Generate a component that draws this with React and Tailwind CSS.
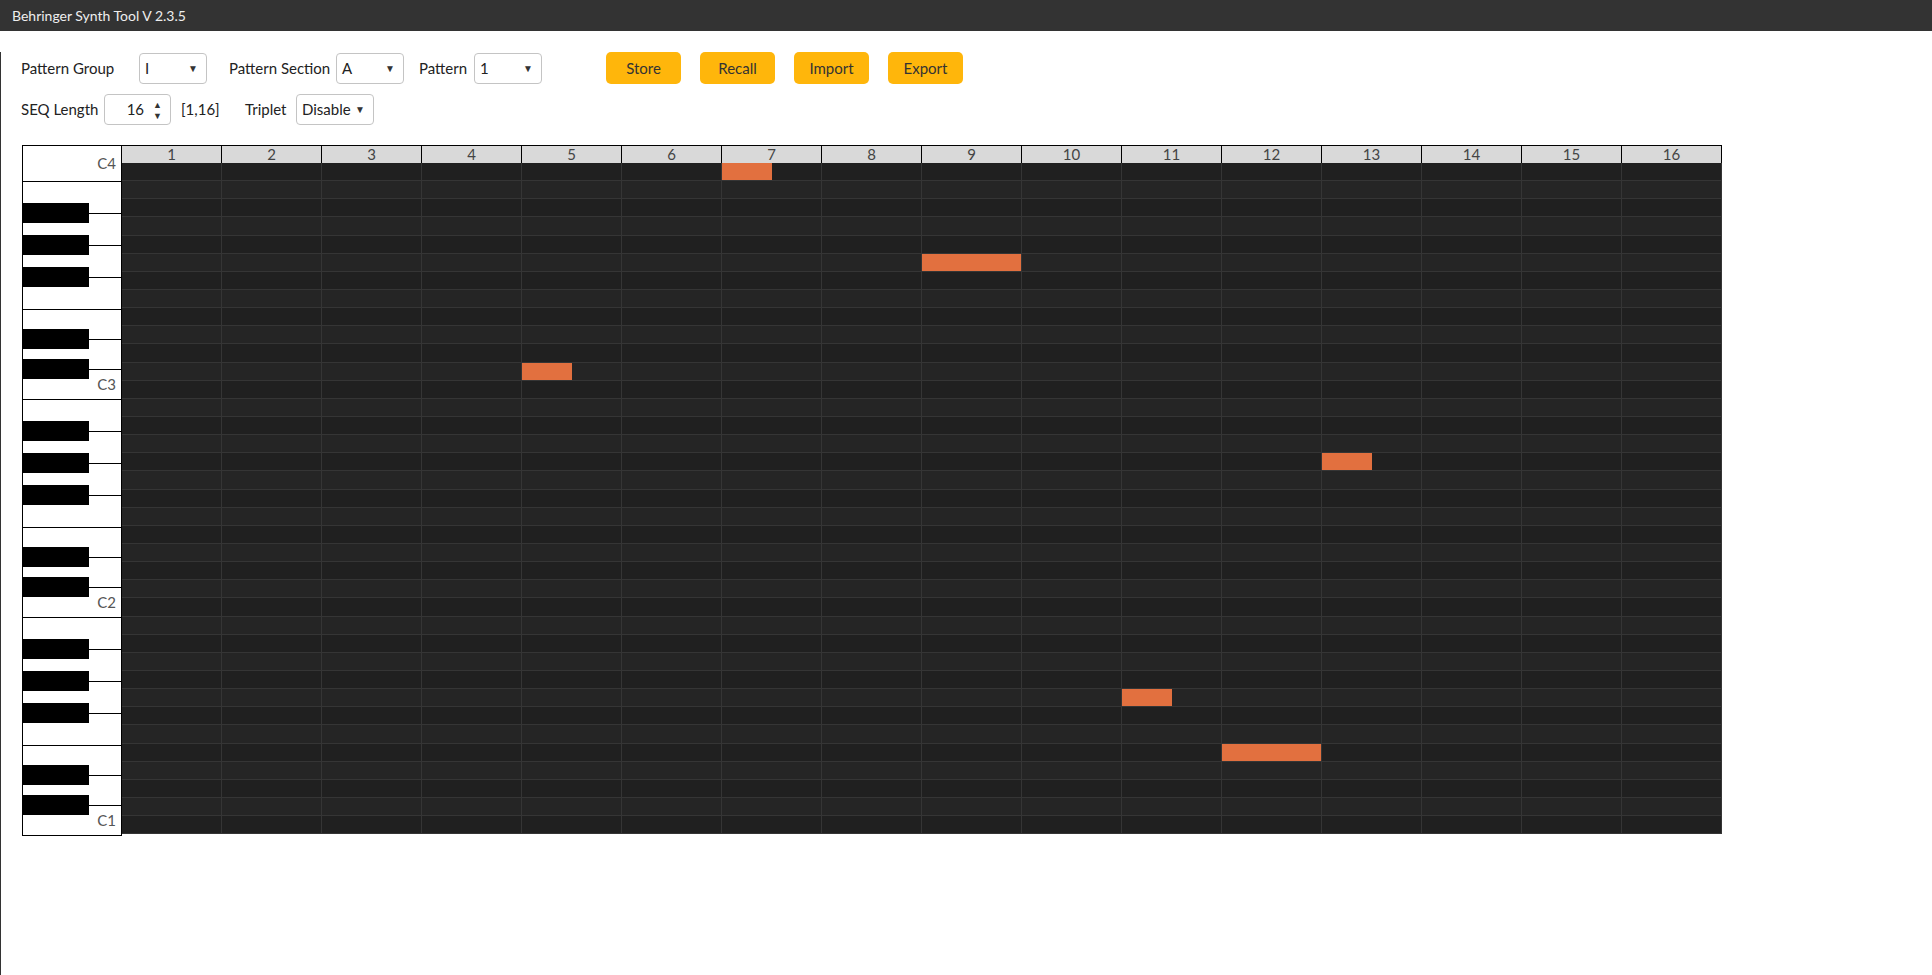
import React from "react";

// Piano roll: C4 (top) down to C1, 37 semitone rows, 16 steps.
const ROWS = 37;
const STEPS = 16;

// notes: row index from the top (0 = C4), step 1..16, half = half-step long
const NOTES = [
  { row: 0, step: 7, half: true },
  { row: 5, step: 9, half: false },
  { row: 11, step: 5, half: true },
  { row: 16, step: 13, half: true },
  { row: 29, step: 11, half: true },
  { row: 32, step: 12, half: false },
];

// white key heights per octave, from B down to C
const OCTAVE_WHITES = [
  { h: "h-[32px]" },
  { h: "h-[32px]" },
  { h: "h-[32px]" },
  { h: "h-[32px]" },
  { h: "h-[30px]" },
  { h: "h-[30px]" },
  { h: "h-[30px]", c: true },
];

// black key tops inside one octave (from B3 edge)
const BLACK_OFFSETS = [21, 53, 85, 147, 177];
const BLACK_TOP = {
  57: "top-[57px]", 89: "top-[89px]", 121: "top-[121px]", 183: "top-[183px]", 213: "top-[213px]",
  275: "top-[275px]", 307: "top-[307px]", 339: "top-[339px]", 401: "top-[401px]", 431: "top-[431px]",
  493: "top-[493px]", 525: "top-[525px]", 557: "top-[557px]", 619: "top-[619px]", 649: "top-[649px]",
};

function Select({ value, w }) {
  return (
    <div
      className={`${w} h-[31px] flex items-center justify-between border border-[#c4c4c4] rounded-[4px] bg-white pl-[5px] pr-[8px] text-[15px] text-[#222]`}
    >
      <span>{value}</span>
      <span className="text-[10px] text-[#333]">▼</span>
    </div>
  );
}

function Piano() {
  const whites = [];
  whites.push(
    <div key="c4" className="h-[36px] border-b border-black flex items-center justify-end pr-[5px] text-[15px] text-[#555]">
      C4
    </div>
  );
  [3, 2, 1].forEach((oct) => {
    OCTAVE_WHITES.forEach((k, i) => {
      const last = oct === 1 && k.c;
      whites.push(
        <div
          key={`${oct}-${i}`}
          className={`${last ? "h-[29px]" : k.h} ${last ? "" : "border-b border-black"} flex items-center justify-end pr-[5px] text-[15px] text-[#555]`}
        >
          {k.c ? `C${oct}` : ""}
        </div>
      );
    });
  });

  const blacks = [];
  [0, 1, 2].forEach((o) => {
    BLACK_OFFSETS.forEach((off) => {
      const top = 36 + o * 218 + off;
      blacks.push(
        <div key={top} className={`absolute left-0 ${BLACK_TOP[top]} w-[66px] h-[20px] bg-black`} />
      );
    });
  });

  return (
    <div className="relative w-[100px] border border-black bg-white flex flex-col shrink-0">
      {whites}
      {blacks}
    </div>
  );
}

function Grid() {
  const rows = Array.from({ length: ROWS }, (_, r) => r);
  const steps = Array.from({ length: STEPS }, (_, s) => s + 1);
  return (
    <div className="w-[1600px] flex flex-col">
      <div className="h-[18px] flex border-t border-black bg-[#d9d9d9]">
        {steps.map((s) => (
          <div
            key={s}
            className="flex-1 border-r border-black flex items-center justify-center text-[15px] leading-none text-[#444]"
          >
            {s}
          </div>
        ))}
      </div>
      <div className="h-[671px] flex flex-col">
        {rows.map((r) => (
          <div
            key={r}
            className={`flex-1 flex border-b border-[#353535] ${r % 2 === 0 ? "bg-[#202020]" : "bg-[#252525]"}`}
          >
            {steps.map((s) => {
              const note = NOTES.find((n) => n.row === r && n.step === s);
              return (
                <div key={s} className="flex-1 border-r border-[#353535] flex">
                  {note && (
                    <div className={`${note.half ? "w-1/2" : "w-full"} h-full bg-[#e2703f]`} />
                  )}
                </div>
              );
            })}
          </div>
        ))}
      </div>
    </div>
  );
}

export default function App() {
  return (
    <div className="w-[1932px] h-[975px] bg-white font-['Lato',sans-serif] text-[#222] overflow-hidden">
      <div className="h-[31px] bg-[#333333] flex items-center pl-[12px] text-[14px] text-[#eeeeee]">
        Behringer Synth Tool V 2.3.5
      </div>

      <div className="h-[944px] border-l border-[#333] pl-[20px]">
        {/* top controls */}
        <div className="mt-[21px] h-[32px] flex items-center text-[15px] text-[#222]">
          <span className="w-[118px]">Pattern Group</span>
          <Select value="I" w="w-[68px]" />
          <span className="ml-[22px] w-[107px]">Pattern Section</span>
          <Select value="A" w="w-[68px]" />
          <span className="ml-[15px] w-[55px]">Pattern</span>
          <Select value="1" w="w-[68px]" />
          <div className="ml-[64px] flex gap-[19px]">
            {["Store", "Recall", "Import", "Export"].map((b) => (
              <button
                key={b}
                type="button"
                className="w-[75px] h-[32px] rounded-[5px] bg-[#ffb60b] text-[15px] text-[#333]"
              >
                {b}
              </button>
            ))}
          </div>
        </div>

        <div className="mt-[10px] h-[31px] flex items-center text-[15px] text-[#222]">
          <span className="w-[83px]">SEQ Length</span>
          <div className="w-[67px] h-[31px] border border-[#c4c4c4] rounded-[4px] flex items-center justify-end pr-[8px] gap-[9px]">
            <span>16</span>
            <div className="flex flex-col text-[9px] leading-[11px] text-[#333]">
              <span>▲</span>
              <span>▼</span>
            </div>
          </div>
          <span className="ml-[10px] w-[64px]">[1,16]</span>
          <span className="w-[51px]">Triplet</span>
          <Select value="Disable" w="w-[78px]" />
        </div>

        {/* piano roll */}
        <div className="mt-[20px] ml-[1px] flex items-start">
          <Piano />
          <Grid />
        </div>
      </div>
    </div>
  );
}
